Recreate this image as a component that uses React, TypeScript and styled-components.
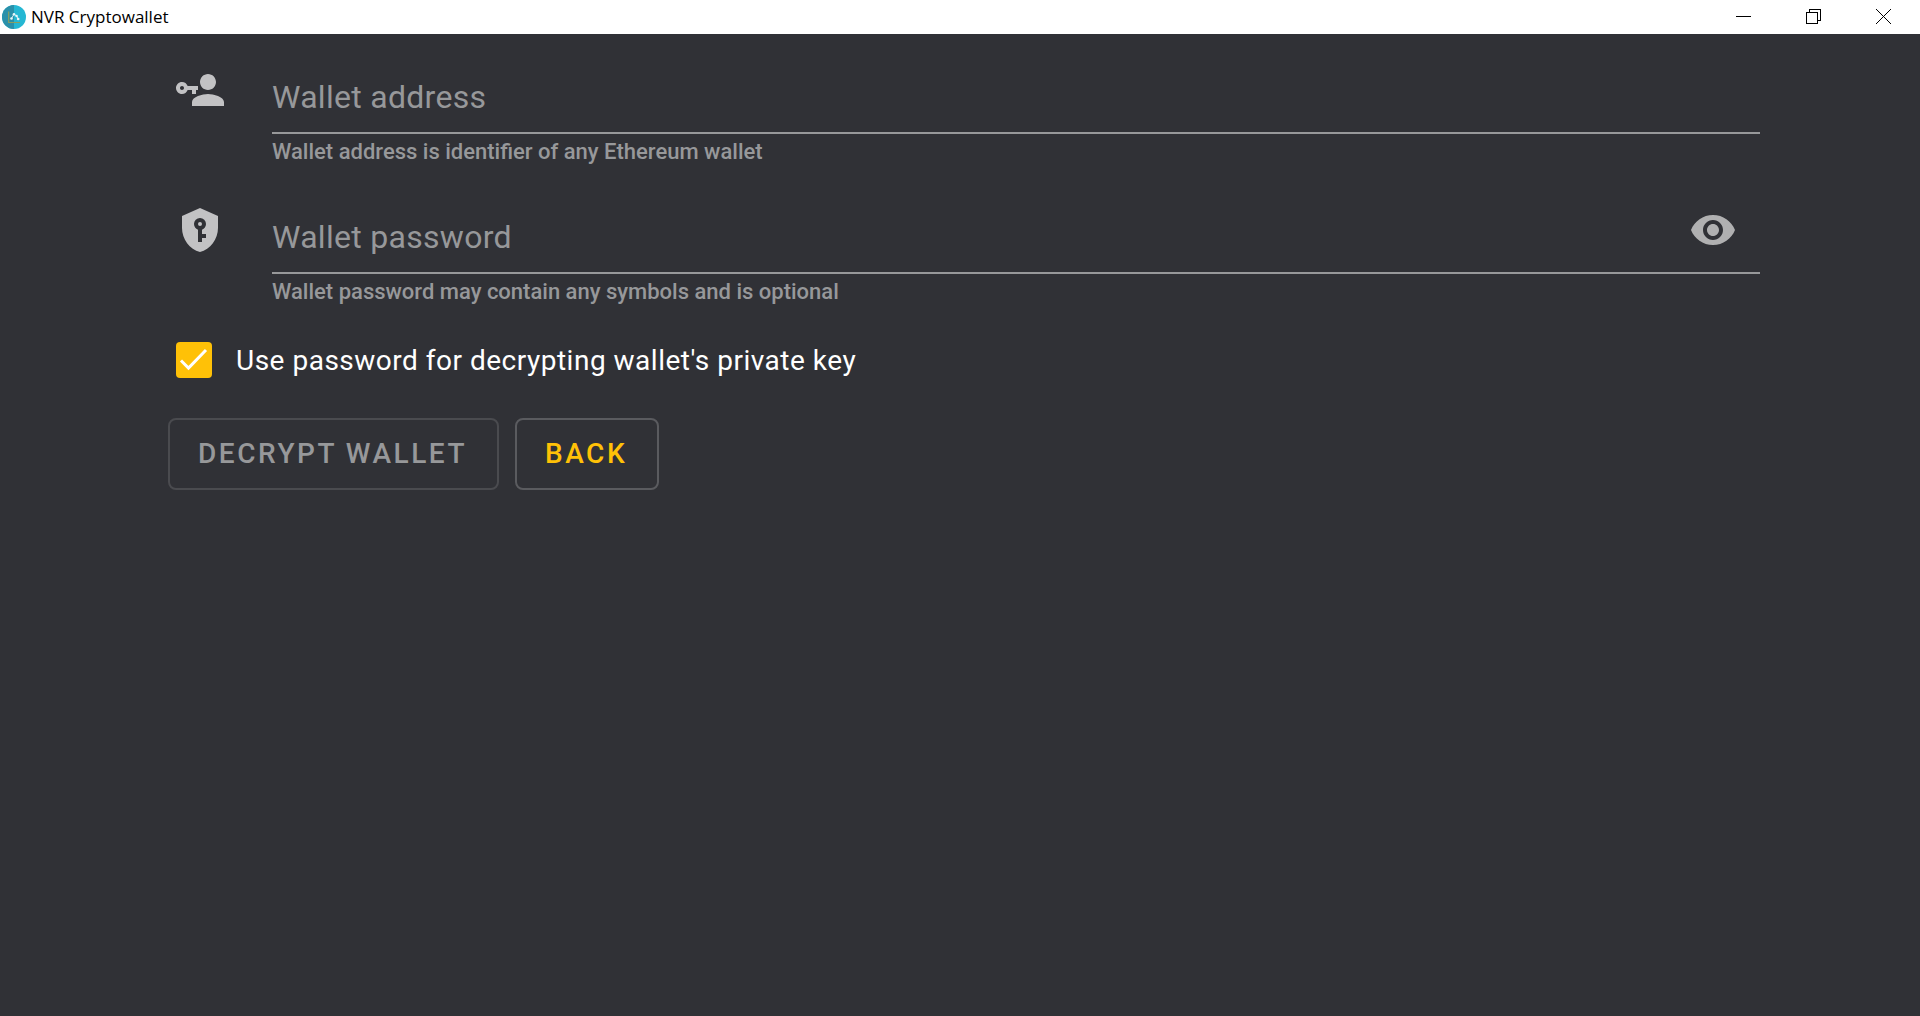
import React, { useState } from "react";
import styled, { createGlobalStyle } from "styled-components";

const GlobalStyle = createGlobalStyle`
  * { box-sizing: border-box; }
  body { margin: 0; background: #303136; color: #fff; font-family: Roboto, sans-serif; }
  button, input { font: inherit; color: inherit; }
`;

const Window = styled.div`
  display: flex;
  flex-direction: column;
  min-height: 100vh;
`;

const TitleBar = styled.header`
  display: flex;
  align-items: center;
  height: 34px;
  padding: 0 2px;
  background: #fff;
  color: #000;
`;

const AppTitle = styled.h1`
  flex: 1;
  margin: 0 0 0 5px;
  font: 400 17px/24px "Open Sans", "Noto Sans", sans-serif;
`;

const WindowButton = styled.button`
  display: flex;
  align-items: center;
  align-self: flex-start;
  justify-content: center;
  width: 70px;
  height: 33px;
  padding: 0;
  border: 0;
  background: none;
`;

const Form = styled.form`
  display: flex;
  flex-direction: column;
  padding: 16px 160px;
`;

const Field = styled.div`
  display: grid;
  grid-template-columns: 112px 1fr;
  height: 140px;
`;

const FieldIcon = styled.div`
  padding: 16px 16px 0;
  color: #c2c2c4;
`;

const InputBox = styled.div`
  display: grid;
  grid-template-columns: 1fr auto;
  height: 84px;
  border-bottom: 2px solid #97989a;
`;

const FieldLabel = styled.label`
  grid-area: 1 / 1;
  align-self: center;
  padding-top: 12px;
  font-size: 32px;
  line-height: 36px;
  letter-spacing: 0.009em;
  color: #97989a;
  pointer-events: none;
`;

const TextInput = styled.input`
  grid-area: 1 / 1;
  min-width: 0;
  padding: 12px 0 0;
  border: 0;
  outline: 0;
  background: none;
  font-size: 32px;
`;

const RevealButton = styled.button`
  display: flex;
  padding: 16px 23px 0;
  border: 0;
  background: none;
  color: #b0b0b1;
`;

const HelperText = styled.p`
  margin: 5px 0 0;
  font-size: 22px;
  font-weight: 500;
  line-height: 26px;
  color: #97989a;
`;

const CheckRow = styled.div`
  display: flex;
  align-items: center;
  gap: 24px;
  height: 80px;
  margin: -10px 0 18px;
  padding-left: 16px;
  font-size: 28px;
  line-height: 40px;
  letter-spacing: 0.018em;
`;

const CheckLabel = styled.label`
  padding-top: 2px;
`;

const CheckMark = styled.span`
  display: grid;
  width: 36px;
  height: 36px;
  border-radius: 4px;
  background: #ffc107;
  > * { grid-area: 1 / 1; }
`;

const CheckInput = styled.input`
  appearance: none;
  width: 36px;
  height: 36px;
  margin: 0;
  border-radius: 4px;
  &:not(:checked) { border: 4px solid #b0b0b1; background: #303136; }
  &:not(:checked) + svg { display: none; }
`;

const Tick = styled.svg`
  pointer-events: none;
`;

const Actions = styled.div`
  display: flex;
  gap: 16px;
  padding-left: 8px;
`;

const ActionButton = styled.button`
  height: 72px;
  padding: 0 30px 2px 28px;
  border: 2px solid #5a5b5f;
  border-radius: 8px;
  background: none;
  font-size: 28px;
  font-weight: 500;
  letter-spacing: 0.09em;
  text-transform: uppercase;
  color: #ffc107;
  &:disabled { border-color: #4a4b4f; color: #97989a; }
`;

const Glyph = ({ d }: { d: string }) => (
  <svg width="48" height="48" viewBox="0 0 24 24" fill="currentColor" fillRule="evenodd" aria-hidden="true">
    <path d={d} />
  </svg>
);

const ACCOUNT_KEY =
  "M11 10V12H10V14H8V12H5.83C5.42 13.17 4.31 14 3 14C1.34 14 0 12.66 0 11S1.34 8 3 8C4.31 8 5.42 8.83 5.83 10H11M3 10C2.45 10 2 10.45 2 11S2.45 12 3 12 4 11.55 4 11 3.55 10 3 10M16 14C18.67 14 24 15.34 24 18V20H8V18C8 15.34 13.33 14 16 14M16 12C13.8 12 12 10.2 12 8S13.8 4 16 4 20 5.8 20 8 18.2 12 16 12Z";
const SHIELD_KEY =
  "M12 1L3 5V11C3 16.55 6.84 21.74 12 23C17.16 21.74 21 16.55 21 11V5L12 1M12 6A3 3 0 0 1 15 9C15 10.31 14.17 11.42 13 11.83V14H15V16H13V18H11V11.83C9.83 11.42 9 10.31 9 9A3 3 0 0 1 12 6M12 8A1 1 0 0 0 11 9A1 1 0 0 0 12 10A1 1 0 0 0 13 9A1 1 0 0 0 12 8Z";
const EYE =
  "M12 4.5C7 4.5 2.73 7.61 1 12c1.73 4.39 6 7.5 11 7.5s9.27-3.11 11-7.5c-1.73-4.39-6-7.5-11-7.5zM12 17c-2.76 0-5-2.24-5-5s2.24-5 5-5 5 2.24 5 5-2.24 5-5 5zm0-8c-1.66 0-3 1.34-3 3s1.34 3 3 3 3-1.34 3-3-1.34-3-3-3z";

export default function App() {
  const [address, setAddress] = useState("");
  const [password, setPassword] = useState("");
  const [revealed, setRevealed] = useState(false);

  return (
    <>
      <GlobalStyle />
      <Window>
        <TitleBar>
          <svg width="24" height="24" viewBox="0 0 24 24" aria-hidden="true">
            <circle cx="12" cy="12" r="12" fill="#25b7d3" />
            <path d="M12 0a12 12 0 0 0 0 24z" fill="#2a90aa" />
            <path d="M6.700 6.500v11H18" fill="none" stroke="#8a9f62" strokeWidth="1.200" />
            <path d="M9.500 13.500L12 9.200l2.600 1.800 1.600 3" fill="none" stroke="#d5edf3" strokeWidth="1" />
            <g fill="#e8f6fa">
              <circle cx="9.500" cy="13.500" r="1.300" />
              <circle cx="12" cy="9.200" r="1.300" />
              <circle cx="14.600" cy="11" r="1.200" />
              <circle cx="16.200" cy="14" r="1.300" />
            </g>
          </svg>
          <AppTitle>NVR Cryptowallet</AppTitle>
          <WindowButton aria-label="Minimize">
            <svg width="15" height="15" shapeRendering="crispEdges"><path d="M0 7h15v1H0z" /></svg>
          </WindowButton>
          <WindowButton aria-label="Restore">
            <svg width="15" height="15" fill="none" stroke="#000" shapeRendering="crispEdges">
              <path d="M.5 3.500h11v11H.5zM3.500 3.500v-3h11v11h-3" />
            </svg>
          </WindowButton>
          <WindowButton aria-label="Close">
            <svg width="15" height="15" fill="none" stroke="#000"><path d="M0 0l15 15M15 0L0 15" /></svg>
          </WindowButton>
        </TitleBar>

        <Form onSubmit={(e) => e.preventDefault()}>
          <Field>
            <FieldIcon><Glyph d={ACCOUNT_KEY} /></FieldIcon>
            <div>
              <InputBox>
                {!address && <FieldLabel htmlFor="address">Wallet address</FieldLabel>}
                <TextInput id="address" aria-describedby="address-help" value={address} onChange={(e) => setAddress(e.target.value)} />
              </InputBox>
              <HelperText id="address-help">Wallet address is identifier of any Ethereum wallet</HelperText>
            </div>
          </Field>
          <Field>
            <FieldIcon><Glyph d={SHIELD_KEY} /></FieldIcon>
            <div>
              <InputBox>
                {!password && <FieldLabel htmlFor="password">Wallet password</FieldLabel>}
                <TextInput id="password" type={revealed ? "text" : "password"} aria-describedby="password-help" value={password} onChange={(e) => setPassword(e.target.value)} />
                <RevealButton type="button" aria-label="Show password" onClick={() => setRevealed(!revealed)}>
                  <Glyph d={EYE} />
                </RevealButton>
              </InputBox>
              <HelperText id="password-help">Wallet password may contain any symbols and is optional</HelperText>
            </div>
          </Field>
          <CheckRow>
            <CheckMark>
              <CheckInput id="use-password" type="checkbox" defaultChecked />
              <Tick width="36" height="36" viewBox="0 0 36 36" fill="none" stroke="#fff" strokeWidth="3">
                <path d="M5 18.500l7.500 7.500L30 8" />
              </Tick>
            </CheckMark>
            <CheckLabel htmlFor="use-password">Use password for decrypting wallet's private key</CheckLabel>
          </CheckRow>
          <Actions>
            <ActionButton type="submit" disabled={!address}>Decrypt wallet</ActionButton>
            <ActionButton type="button">Back</ActionButton>
          </Actions>
        </Form>
      </Window>
    </>
  );
}
